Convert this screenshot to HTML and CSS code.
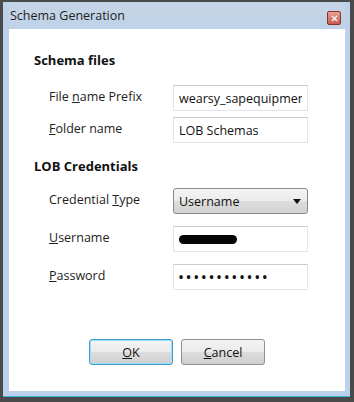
FILE: index.html
```html
<!DOCTYPE html>
<html lang="en">
<head>
    <meta charset="UTF-8">
    <title>Schema Generation</title>
    <link rel="stylesheet" href="styles.css">
</head>
<body>
    <div id="window">
        <div id="frame">
            <div class="titlebar">
                <span class="title">Schema Generation</span>
                <button class="close" type="button">
                    <svg width="7" height="7" viewBox="0 0 7 7">
                        <path d="M1 1 L6 6 M6 1 L1 6" stroke="#eeeeee" stroke-width="1.6"/>
                    </svg>
                </button>
            </div>
            <div id="content">
                <h2>Schema files</h2>
                <div class="rows first">
                    <label for="prefix">File <u>n</u>ame Prefix</label>
                    <input type="text" id="prefix" value="wearsy_sapequipment">

                    <label for="folder"><u>F</u>older name</label>
                    <input type="text" id="folder" value="LOB Schemas">
                </div>

                <h2>LOB Credentials</h2>
                <div class="rows second">
                    <label>Credential <u>T</u>ype</label>
                    <div class="combo">
                        <span>Username</span>
                        <svg width="8" height="5" viewBox="0 0 8 5">
                            <path d="M0 0 H8 L4 5 Z" fill="#111"/>
                        </svg>
                    </div>

                    <label><u>U</u>sername</label>
                    <div class="box"><span class="blot"></span></div>

                    <label for="password"><u>P</u>assword</label>
                    <input type="password" id="password" value="xxxxxxxxxxxx">
                </div>

                <div class="buttons">
                    <button type="button" class="btn default"><u>O</u>K</button>
                    <button type="button" class="btn"><u>C</u>ancel</button>
                </div>
            </div>
        </div>
    </div>
</body>
</html>
```

FILE: styles.css
```css
body {
    margin: 0;
    padding: 0;
    font-family: "Open Sans", "Noto Sans", sans-serif;
    background-color: #3a3a3a;
}

#window {
    width: 354px;
    height: 402px;
    box-sizing: border-box;
    padding: 2px 4px 5px 3px;
    background-color: #4a4a4a;
}

#frame {
    height: 395px;
    box-sizing: border-box;
    display: flex;
    flex-direction: column;
    background-color: #bcd2ea;
    border-bottom: 1px solid #3fb3d8;
    padding: 0 5px 5px 6px;
}

.titlebar {
    height: 27px;
    display: flex;
    justify-content: space-between;
    align-items: flex-start;
    background: linear-gradient(#c6d5e6, #bfd2e8);
}

.title {
    font-size: 12.5px;
    color: #1e1e1e;
    margin: 5px 0 0 1px;
}

.close {
    width: 14px;
    height: 14px;
    margin: 9px 4px 0 0;
    padding: 0;
    display: flex;
    align-items: center;
    justify-content: center;
    border: 1px solid #8c2f27;
    border-radius: 2px;
    background: linear-gradient(#e7a497, #c85a4c);
}

#content {
    flex: 1;
    background-color: #fff;
    padding: 21px 0 0 25px;
}

h2 {
    margin: 0;
    font-size: 13px;
    font-weight: bold;
    line-height: 20px;
    color: #111;
}

.rows {
    display: grid;
    grid-template-columns: 124px 135px;
    grid-auto-rows: 26px;
    padding-left: 15px;
}

.rows.first {
    margin: 15px 0 13px;
    row-gap: 6px;
}

.rows.second {
    margin-top: 12px;
    row-gap: 12px;
}

label {
    font-size: 12.5px;
    color: #222;
    align-self: center;
    padding-bottom: 4px;
}

input[type="text"],
input[type="password"],
.box {
    box-sizing: border-box;
    height: 26px;
    margin: 0;
    padding: 0 5px;
    font-family: inherit;
    font-size: 12.5px;
    color: #111;
    border: 1px solid #e2e6ec;
    border-top-color: #c9ccd2;
    background-color: #fff;
}

input[type="password"] {
    font-size: 16px;
    letter-spacing: 1.6px;
    padding-left: 4px;
}

.box {
    display: flex;
    align-items: center;
}

.blot {
    width: 58px;
    height: 9px;
    background-color: #050505;
    border-radius: 5px;
    margin-top: 1px;
}

.combo {
    display: flex;
    justify-content: space-between;
    align-items: center;
    padding: 0 6px 0 5px;
    font-size: 12.5px;
    color: #111;
    border: 1px solid #8a8a8a;
    border-radius: 3px;
    background: linear-gradient(#f4f4f4 0%, #ebebeb 50%, #dddddd 51%, #d2d2d2 100%);
}

.buttons {
    display: flex;
    justify-content: center;
    gap: 8px;
    margin: 49px 0 0 -25px;
}

.btn {
    width: 84px;
    height: 26px;
    font-family: inherit;
    font-size: 12.5px;
    color: #111;
    border: 1px solid #8e8f8f;
    border-radius: 3px;
    background: linear-gradient(#f3f3f3 0%, #ebebeb 50%, #dddddd 51%, #cfcfcf 100%);
}

.btn.default {
    border-color: #3c9fd0;
    box-shadow: inset 0 0 0 1px #9fdcf5;
}
```
